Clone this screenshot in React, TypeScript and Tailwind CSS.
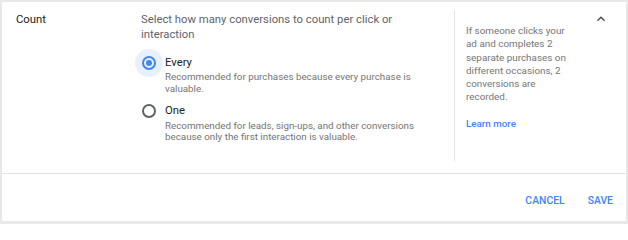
import * as React from "react"

type CountOption = {
  id: string
  title: string
  description: string
}

const options: CountOption[] = [
  {
    id: "every",
    title: "Every",
    description:
      "Recommended for purchases because every purchase is valuable.",
  },
  {
    id: "one",
    title: "One",
    description:
      "Recommended for leads, sign-ups, and other conversions because only the first interaction is valuable.",
  },
]

export default function App() {
  const [selected, setSelected] = React.useState("every")

  return (
    <div className="h-[224px] w-[628px] bg-[#e8e8e8] pt-[2px] pr-[2px] pb-[3px] pl-[2px] font-['Roboto','Liberation_Sans',sans-serif]">
      <div className="flex h-full flex-col bg-white">
        <div className="flex h-[172px] border-b border-[#e3e3e3]">
          <div className="w-[139px] shrink-0 pt-[9.5px] pl-[14px] text-[11.3px] leading-[15px] text-[#202124]">
            Count
          </div>

          <div className="w-[313px] shrink-0 pt-[9.5px] pr-[13px]">
            <p className="text-[11.3px] leading-[15px] text-[#5f6368]">
              Select how many conversions to count per click or interaction
            </p>
            <div className="mt-[7px] flex flex-col gap-[3px]">
              {options.map((option) => (
                <CountRadio
                  checked={selected === option.id}
                  key={option.id}
                  onSelect={() => setSelected(option.id)}
                  option={option}
                />
              ))}
            </div>
          </div>

          <div className="mt-[8px] mb-[12px] flex flex-1 border-l border-[#e3e3e3]">
            <div className="box-content w-[106px] pt-[14px] pl-[11px]">
              <p className="text-[9.9px] leading-[13.3px] text-[#757575]">
                If someone clicks your ad and completes 2 separate purchases on
                different occasions, 2 conversions are recorded.
              </p>
              <a
                className="mt-[13px] block text-[9.8px] leading-[13.3px] font-medium text-[#4285f4]"
                href="#"
              >
                Learn more
              </a>
            </div>
            <button
              aria-label="Collapse"
              className="mt-[1px] mr-[17px] ml-auto h-[16px] w-[16px]"
              type="button"
            >
              <svg className="h-[16px] w-[16px]" viewBox="0 0 24 24">
                <path
                  d="M12 8l-6 6 1.41 1.41L12 10.83l4.59 4.58L18 14z"
                  fill="#4a4a4a"
                />
              </svg>
            </button>
          </div>
        </div>

        <div className="flex flex-1 items-start justify-end gap-[23px] pt-[20px] pr-[13px] text-[10.4px] leading-[14px] font-medium text-[#4285f4]">
          <button type="button">CANCEL</button>
          <button type="button">SAVE</button>
        </div>
      </div>
    </div>
  )
}

function CountRadio({
  checked,
  onSelect,
  option,
}: {
  checked: boolean
  onSelect: () => void
  option: CountOption
}) {
  return (
    <label className="flex cursor-pointer items-start" onClick={onSelect}>
      <span
        className={
          checked
            ? "-ml-[6.5px] flex h-[28px] w-[28px] shrink-0 items-center justify-center rounded-full bg-[#e8f0fe]"
            : "-ml-[6.5px] flex h-[28px] w-[28px] shrink-0 items-center justify-center rounded-full"
        }
      >
        <span
          className={
            checked
              ? "flex h-[14px] w-[14px] items-center justify-center rounded-full border-2 border-[#4285f4]"
              : "flex h-[14px] w-[14px] items-center justify-center rounded-full border-2 border-[#5f6368]"
          }
        >
          {checked && (
            <span className="h-[6px] w-[6px] rounded-full bg-[#4285f4]" />
          )}
        </span>
      </span>
      <span className="ml-[2.5px] pt-[6px]">
        <span className="block text-[11.3px] leading-[15px] text-[#202124]">
          {option.title}
        </span>
        <span className="mt-[1.7px] block text-[9.8px] leading-[11.4px] text-[#757575]">
          {option.description}
        </span>
      </span>
    </label>
  )
}
